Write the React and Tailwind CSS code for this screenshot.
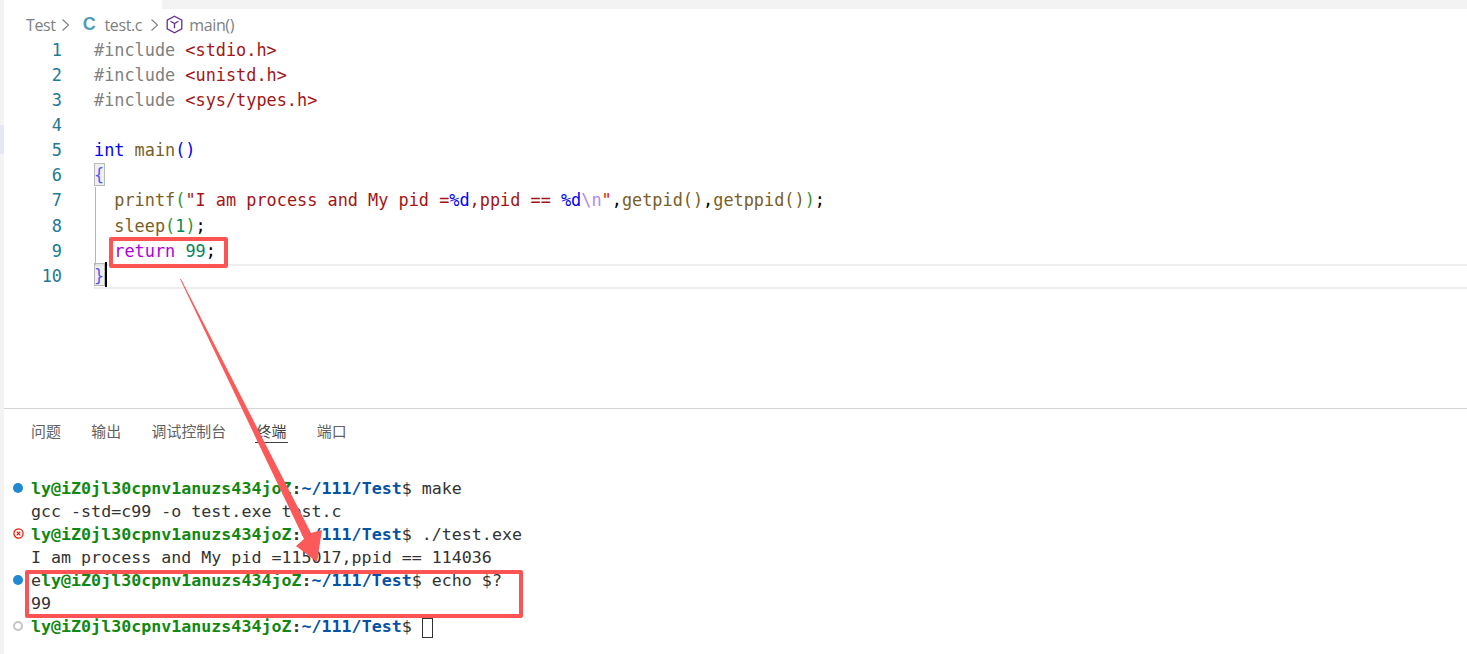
import React from 'react';

const mono = "font-['DejaVu_Sans_Mono','Liberation_Mono',monospace]";

const T = ({ c, children }) => <span className={c}>{children}</span>;

const fn = 'text-[#795e26]';
const str = 'text-[#a31515]';
const gray = 'text-[#808080]';
const kw = 'text-[#0000ff]';
const num = 'text-[#098658]';
const blk = 'text-[#000000]';

const lines = [
    <><T c={gray}>#include </T><T c={str}>&lt;stdio.h&gt;</T></>,
    <><T c={gray}>#include </T><T c={str}>&lt;unistd.h&gt;</T></>,
    <><T c={gray}>#include </T><T c={str}>&lt;sys/types.h&gt;</T></>,
    null,
    <><T c={kw}>int</T> <T c={fn}>main</T><T c={kw}>()</T></>,
    <T c={kw}>{'{'}</T>,
    <>
        {'  '}<T c={fn}>printf</T><T c="text-[#319331]">(</T>
        <T c={str}>"I am process and My pid =</T><T c="text-[#0000ff]">%d</T><T c={str}>,ppid == </T><T c="text-[#0000ff]">%d</T>
        <T c="text-[#af87f5]">\n</T><T c="text-[#e51400]">"</T><T c={blk}>,</T><T c={fn}>getpid</T><T c={fn}>()</T><T c={blk}>,</T><T c={fn}>getppid</T><T c={fn}>()</T><T c="text-[#319331]">)</T><T c={blk}>;</T>
    </>,
    <>{'  '}<T c={fn}>sleep</T><T c="text-[#319331]">(</T><T c={num}>1</T><T c="text-[#319331]">)</T><T c={blk}>;</T></>,
    <>{'  '}<T c="text-[#af00db]">return</T> <T c={num}>99</T><T c={blk}>;</T></>,
    <T c={kw}>{'}'}</T>,
];

const Prompt = ({ first = 'ly@iZ0jl30cpnv1anuzs434joZ' }) => (
    <>
        <span className="font-bold text-[#118811]">{first}</span>
        <span className="font-bold text-[#333333]">:</span>
        <span className="font-bold text-[#0451a5]">~/111/Test</span>
        <span className="text-[#333333]">$ </span>
    </>
);

const BlueDot = () => <span className="block w-[10px] h-[10px] rounded-full bg-[#2188d2]" />;

const ErrDot = () => (
    <svg width="11" height="11" viewBox="0 0 11 11" fill="none" stroke="#e51400" strokeWidth="1.2">
        <circle cx="5.5" cy="5.5" r="4.6" />
        <path d="M3.7 3.7l3.6 3.6M7.3 3.7l-3.6 3.6" />
    </svg>
);

const GrayDot = () => <span className="block w-[10px] h-[10px] rounded-full border-2 border-[#c4c4c4]" />;

const termLines = [
    { mark: <BlueDot />, body: <><Prompt />make</> },
    { body: 'gcc -std=c99 -o test.exe test.c' },
    { mark: <ErrDot />, body: <><Prompt />./test.exe</> },
    { body: 'I am process and My pid =115017,ppid == 114036' },
    { mark: <BlueDot />, body: <><span className="text-[#333333]">e</span><Prompt />echo $?</> },
    { body: '99' },
    { mark: <GrayDot />, body: <><Prompt /><span className="inline-block align-middle w-[11px] h-[20px] border border-[#333333]" /></> },
];

const tabs = ['问题', '输出', '调试控制台', '终端', '端口'];

const Chevron = ({ className }) => (
    <svg className={className} width="9" height="14" viewBox="0 0 9 14" fill="none" stroke="#7f7f7f" strokeWidth="1.1">
        <path d="M1.5 1.5l6 5.5-6 5.5" />
    </svg>
);

const App = () => {
    return (
        <div className="relative w-[1467px] h-[654px] overflow-hidden bg-white flex">
            {/* activity bar sliver */}
            <div className="w-[4px] shrink-0 bg-[#f3f3f3] pt-[125px]">
                <div className="h-[29px] bg-[#e6e7f4]" />
            </div>

            <div className="flex-1 min-w-0 flex flex-col">
                {/* tab strip remainder */}
                <div className="h-[9px] flex shrink-0">
                    <div className="w-[158px]" />
                    <div className="flex-1 bg-[#f3f3f3]" />
                </div>

                {/* breadcrumbs */}
                <div className="h-[29px] shrink-0 pt-[2px] flex items-center pl-[22px] text-[16px] text-[#7f7f7f] font-['Open_Sans','Noto_Sans',sans-serif] tracking-[-0.35px]">
                    <span>Test</span>
                    <Chevron className="ml-[5px]" />
                    <span className="ml-[13px] mr-[9px] font-bold text-[18px] text-[#519aba] font-['Liberation_Sans',sans-serif]">C</span>
                    <span>test.c</span>
                    <Chevron className="ml-[8px]" />
                    <svg className="ml-[6px] mr-[5px]" width="19" height="19" viewBox="0 0 19 19" fill="none" stroke="#652d90" strokeWidth="1.3">
                        <path d="M9.5 1.2l7.3 4v8.6l-7.3 4-7.3-4V5.200z" />
                        <path d="M5.5 6.2l4 2.4 4-2.400M9.500 8.600v4.700" />
                    </svg>
                    <span>main()</span>
                </div>

                {/* code lines */}
                <div className={`h-[370px] shrink-0 ${mono} text-[16.87px] whitespace-pre`}>
                    {lines.map((line, i) => (
                        <div key={i} className="flex h-[25.1px]">
                            <div className="w-[58px] shrink-0 flex items-center justify-end text-[#237893]">{i + 1}</div>
                            <div className={`ml-[32px] flex-1 flex items-center ${i === 9 ? 'border-y-2 border-[#eeeeee]' : ''}`}>
                                <div className="relative">
                                    {line}
                                    {i === 5 && <span className="absolute left-0 top-0 w-[11px] h-[23px] bg-[#d7d7d7]/40 border border-[#b9b9b9]" />}
                                    {i === 9 && <span className="absolute left-0 top-[-1px] w-[11px] h-[23px] bg-[#d7d7d7]/40 border border-[#b9b9b9]" />}
                                    {i === 9 && <span className="absolute left-[11px] top-[-2px] w-[2px] h-[25px] bg-black" />}
                                    {i > 5 && i < 9 && <span className="absolute left-[1px] top-[-1px] h-[27px] w-[1px] bg-[#b5b5b5]" />}
                                </div>
                            </div>
                        </div>
                    ))}
                </div>

                {/* panel */}
                <div className="flex-1 border-t border-[#d4d4d4] pt-[9px] flex flex-col">
                    <div className="flex gap-[30.5px] pl-[27px] font-['Noto_Sans_CJK_SC',sans-serif] text-[14.9px] text-[#616161] h-[26px] items-center">
                        {tabs.map((t) => (
                            <div key={t} className={t === '终端' ? 'relative text-[#424242]' : ''}>
                                {t}
                                {t === '终端' && <span className="absolute left-[-2px] right-[-2px] bottom-[-1px] h-px bg-[#424242]" />}
                            </div>
                        ))}
                    </div>
                    <div className={`mt-[34px] ${mono} text-[16.65px] text-[#333333] whitespace-pre`}>
                        {termLines.map((l, i) => (
                            <div key={i} className="flex h-[23px] items-center">
                                <div className="w-[27px] pl-[9px] shrink-0 flex items-center -translate-y-[2px]">{l.mark}</div>
                                <div>{l.body}</div>
                            </div>
                        ))}
                    </div>
                </div>
            </div>

            {/* red annotations */}
            <div className="absolute left-[109px] top-[237px] w-[119px] h-[31px] border-4 border-[#fc5353] rounded-[2px]" />
            <div className="absolute left-[25px] top-[570px] w-[498px] h-[48px] border-4 border-[#fc5353] rounded-[2px]" />
            <svg className="absolute left-0 top-0 pointer-events-none" width="1467" height="654" viewBox="0 0 1467 654">
                <polygon points="180,279 181,279 311,533 322,530 317,562 296,546 304,539" fill="#fc5a5a" />
            </svg>
        </div>
    );
};

export default App;
